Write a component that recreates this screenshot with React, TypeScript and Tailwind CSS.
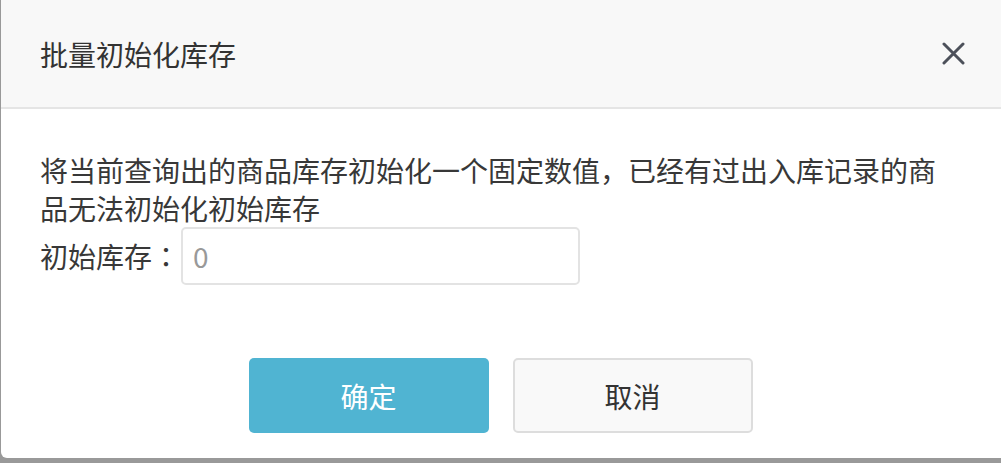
export default function App() {
  return (
    <div
      className="h-[463px] w-[1001px] overflow-hidden bg-[#999999]"
      style={{ fontFamily: '"Noto Sans CJK SC", "Noto Sans", sans-serif' }}
    >
      <div className="ml-px flex h-[458px] w-[1000px] flex-col rounded-bl-[6px] bg-white">
        {/* Header */}
        <div className="flex h-[109px] shrink-0 items-center justify-between border-b-2 border-[#e5e5e5] bg-[#f8f8f8] pl-[39px] pr-[36px]">
          <h4 className="text-[28px] leading-[40px] text-[#333333]">批量初始化库存</h4>
          <button className="flex h-[23px] w-[23px] items-center justify-center">
            <svg width="23" height="23" viewBox="0 0 23 23">
              <path d="M2 2 L21 21 M21 2 L2 21" stroke="#4c505a" strokeWidth="3" strokeLinecap="round" />
            </svg>
          </button>
        </div>

        {/* Body */}
        <div className="pl-[39px] pr-[40px] pt-[42px] text-[28px] leading-[38px] text-[#383838]">
          <p>将当前查询出的商品库存初始化一个固定数值，已经有过出入库记录的商品无法初始化初始库存</p>
          <div className="flex items-center">
            <span>
              初始库存
              <span className="font-['Noto_Sans_CJK_TC',sans-serif]">：</span>
            </span>
            <input
              type="text"
              placeholder="0"
              className="ml-px h-[58px] w-[399px] rounded-[5px] border-2 border-[#e3e3e3] bg-white px-[10px] text-[28px] text-[#333333] outline-none placeholder:text-[#999999]"
            />
          </div>
        </div>

        {/* Actions */}
        <div className="mt-[73px] flex justify-center gap-[24px] pr-px">
          <button className="h-[75px] w-[240px] rounded-[5px] bg-[#50b4d2] text-[28px] text-white">
            确定
          </button>
          <button className="h-[75px] w-[240px] rounded-[5px] border-2 border-[#dddddd] bg-[#f9f9f9] text-[28px] text-[#333333]">
            取消
          </button>
        </div>
      </div>
    </div>
  );
}
